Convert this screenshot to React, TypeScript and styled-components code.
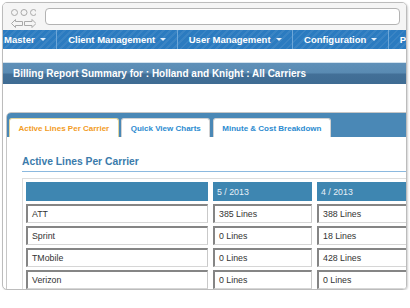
import React from 'react'
import styled, { createGlobalStyle } from 'styled-components'

const GlobalStyle = createGlobalStyle`
    body {
        margin: 0;
        background: #ffffff;
        font-family: 'Liberation Sans', Arial, sans-serif;
    }
`

const Frame = styled.div`
    margin: 2px 0 0 2px;
    width: 405px;
    height: 288px;
    box-sizing: border-box;
    border: 1px solid #bcbcbc;
    border-radius: 5px;
    overflow: hidden;
    background: #ffffff;
    box-shadow: 1px 1px 2px rgba(0, 0, 0, 0.18);
`

const Chrome = styled.div`
    height: 27px;
    box-sizing: border-box;
    background: #f5f5f5;
    display: flex;
    align-items: flex-start;
    padding: 3px 6px 0 5px;
    gap: 9px;
`

const AddressBar = styled.div`
    flex: 1;
    height: 17px;
    margin-top: 2px;
    box-sizing: border-box;
    border: 1px solid #b3b3b3;
    border-radius: 4px;
    background: #ffffff;
`

const Nav = styled.nav`
    height: 19px;
    display: flex;
    margin-left: -10px;
    background-color: #2b7bc0;
    background-image: repeating-linear-gradient(
        135deg,
        rgba(255, 255, 255, 0.07) 0 2px,
        rgba(255, 255, 255, 0) 2px 5px
    );
`

const NavItem = styled.div`
    display: flex;
    align-items: center;
    gap: 5px;
    padding: 0 10.5px 0 11px;
    border-right: 1px solid #6ea7d8;
    color: #ffffff;
    font-weight: bold;
    font-size: 9.5px;
    white-space: nowrap;
`

const Caret = styled.span`
    width: 0;
    height: 0;
    border-left: 3px solid transparent;
    border-right: 3px solid transparent;
    border-top: 3px solid #e6f0fa;
`

const TitleBar = styled.div`
    margin-top: 14px;
    height: 21px;
    display: flex;
    align-items: center;
    padding-left: 10px;
    background: linear-gradient(#5f90b8 0, #5a8bb3 45%, #426f97 55%, #3f6c93 100%);
    box-shadow: 0 -1px 0 #d3e2ed;
    color: #ffffff;
    font-weight: bold;
    font-size: 10px;
    white-space: nowrap;
`

const Panel = styled.div`
    margin: 28px -20px 0 3px;
    border: 1px solid #c6c6c6;
    border-radius: 5px;
    background: #ffffff;
`

const TabStrip = styled.div`
    height: 24px;
    box-sizing: border-box;
    display: flex;
    align-items: flex-end;
    gap: 2.5px;
    padding-left: 2px;
    background: #4a88b6;
    border-radius: 4px 4px 0 0;
`

const Tab = styled.div<{ $active?: boolean }>`
    height: 19px;
    box-sizing: border-box;
    display: flex;
    align-items: center;
    padding: 0 8.5px;
    background: #ffffff;
    border: 1px solid ${(p) => (p.$active ? '#e2d59e' : '#d2d2d2')};
    border-bottom: none;
    border-radius: 3px 3px 0 0;
    color: ${(p) => (p.$active ? '#f29c1f' : '#2c8bd0')};
    font-weight: bold;
    font-size: 8px;
    white-space: nowrap;
`

const Body = styled.div`
    padding: 19px 0 0 15px;
`

const Heading = styled.h2`
    margin: 0;
    padding-bottom: 3px;
    border-bottom: 1px solid #8cb9df;
    color: #3b7bab;
    font-size: 10.3px;
    line-height: 12px;
    font-weight: bold;
`

const Grid = styled.div`
    margin-top: 6px;
    display: grid;
    grid-template-columns: 182px 99px 99px;
    column-gap: 5px;
    row-gap: 3px;
    padding: 3px;
    border: 1px solid #dddddd;
`

const Cell = styled.div<{ $head?: boolean }>`
    height: 19px;
    box-sizing: border-box;
    display: flex;
    align-items: center;
    padding-left: 4px;
    font-size: 8.8px;
    white-space: nowrap;
    background: ${(p) => (p.$head ? '#3e86b1' : '#ffffff')};
    color: ${(p) => (p.$head ? '#e8f0f7' : '#333333')};
    border-style: solid;
    border-width: ${(p) => (p.$head ? '0' : '2px 1px 1px 2px')};
    border-color: #858585 #c9c9c9 #d6d6d6 #858585;
`

const WindowControls = () => (
    <svg width="28" height="22" viewBox="0 0 28 22" fill="none" stroke="#a9a9a9" strokeWidth="1">
        <circle cx="6.5" cy="6.5" r="3" />
        <circle cx="16" cy="6.5" r="3" />
        <circle cx="25.5" cy="6.5" r="3" />
        <path d="M3.5 17.5 L7.5 13.5 L7.5 15.5 L14.5 15.5 L14.5 19.5 L7.5 19.5 L7.5 21.5 Z" />
        <path d="M28 17.5 L24 13.5 L24 15.5 L16.5 15.5 L16.5 19.5 L24 19.5 L24 21.5 Z" />
    </svg>
)

const menu = ['Master', 'Client Management', 'User Management', 'Configuration', 'Provisioning']
const tabs = ['Active Lines Per Carrier', 'Quick View Charts', 'Minute & Cost Breakdown']
const rows = [
    ['ATT', '385 Lines', '388 Lines'],
    ['Sprint', '0 Lines', '18 Lines'],
    ['TMobile', '0 Lines', '428 Lines'],
    ['Verizon', '0 Lines', '0 Lines'],
]

const App: React.FC = () => (
    <>
        <GlobalStyle />
        <Frame>
            <Chrome>
                <WindowControls />
                <AddressBar />
            </Chrome>
            <Nav>
                {menu.map((m) => (
                    <NavItem key={m}>
                        {m}
                        <Caret />
                    </NavItem>
                ))}
            </Nav>
            <TitleBar>Billing Report Summary for : Holland and Knight : All Carriers</TitleBar>
            <Panel>
                <TabStrip>
                    {tabs.map((t, i) => (
                        <Tab key={t} $active={i === 0}>
                            {t}
                        </Tab>
                    ))}
                </TabStrip>
                <Body>
                    <Heading>Active Lines Per Carrier</Heading>
                    <Grid>
                        <Cell $head />
                        <Cell $head>5 / 2013</Cell>
                        <Cell $head>4 / 2013</Cell>
                        {rows.map((r) => r.map((c, i) => <Cell key={r[0] + i}>{c}</Cell>))}
                    </Grid>
                </Body>
            </Panel>
        </Frame>
    </>
)

export default App
